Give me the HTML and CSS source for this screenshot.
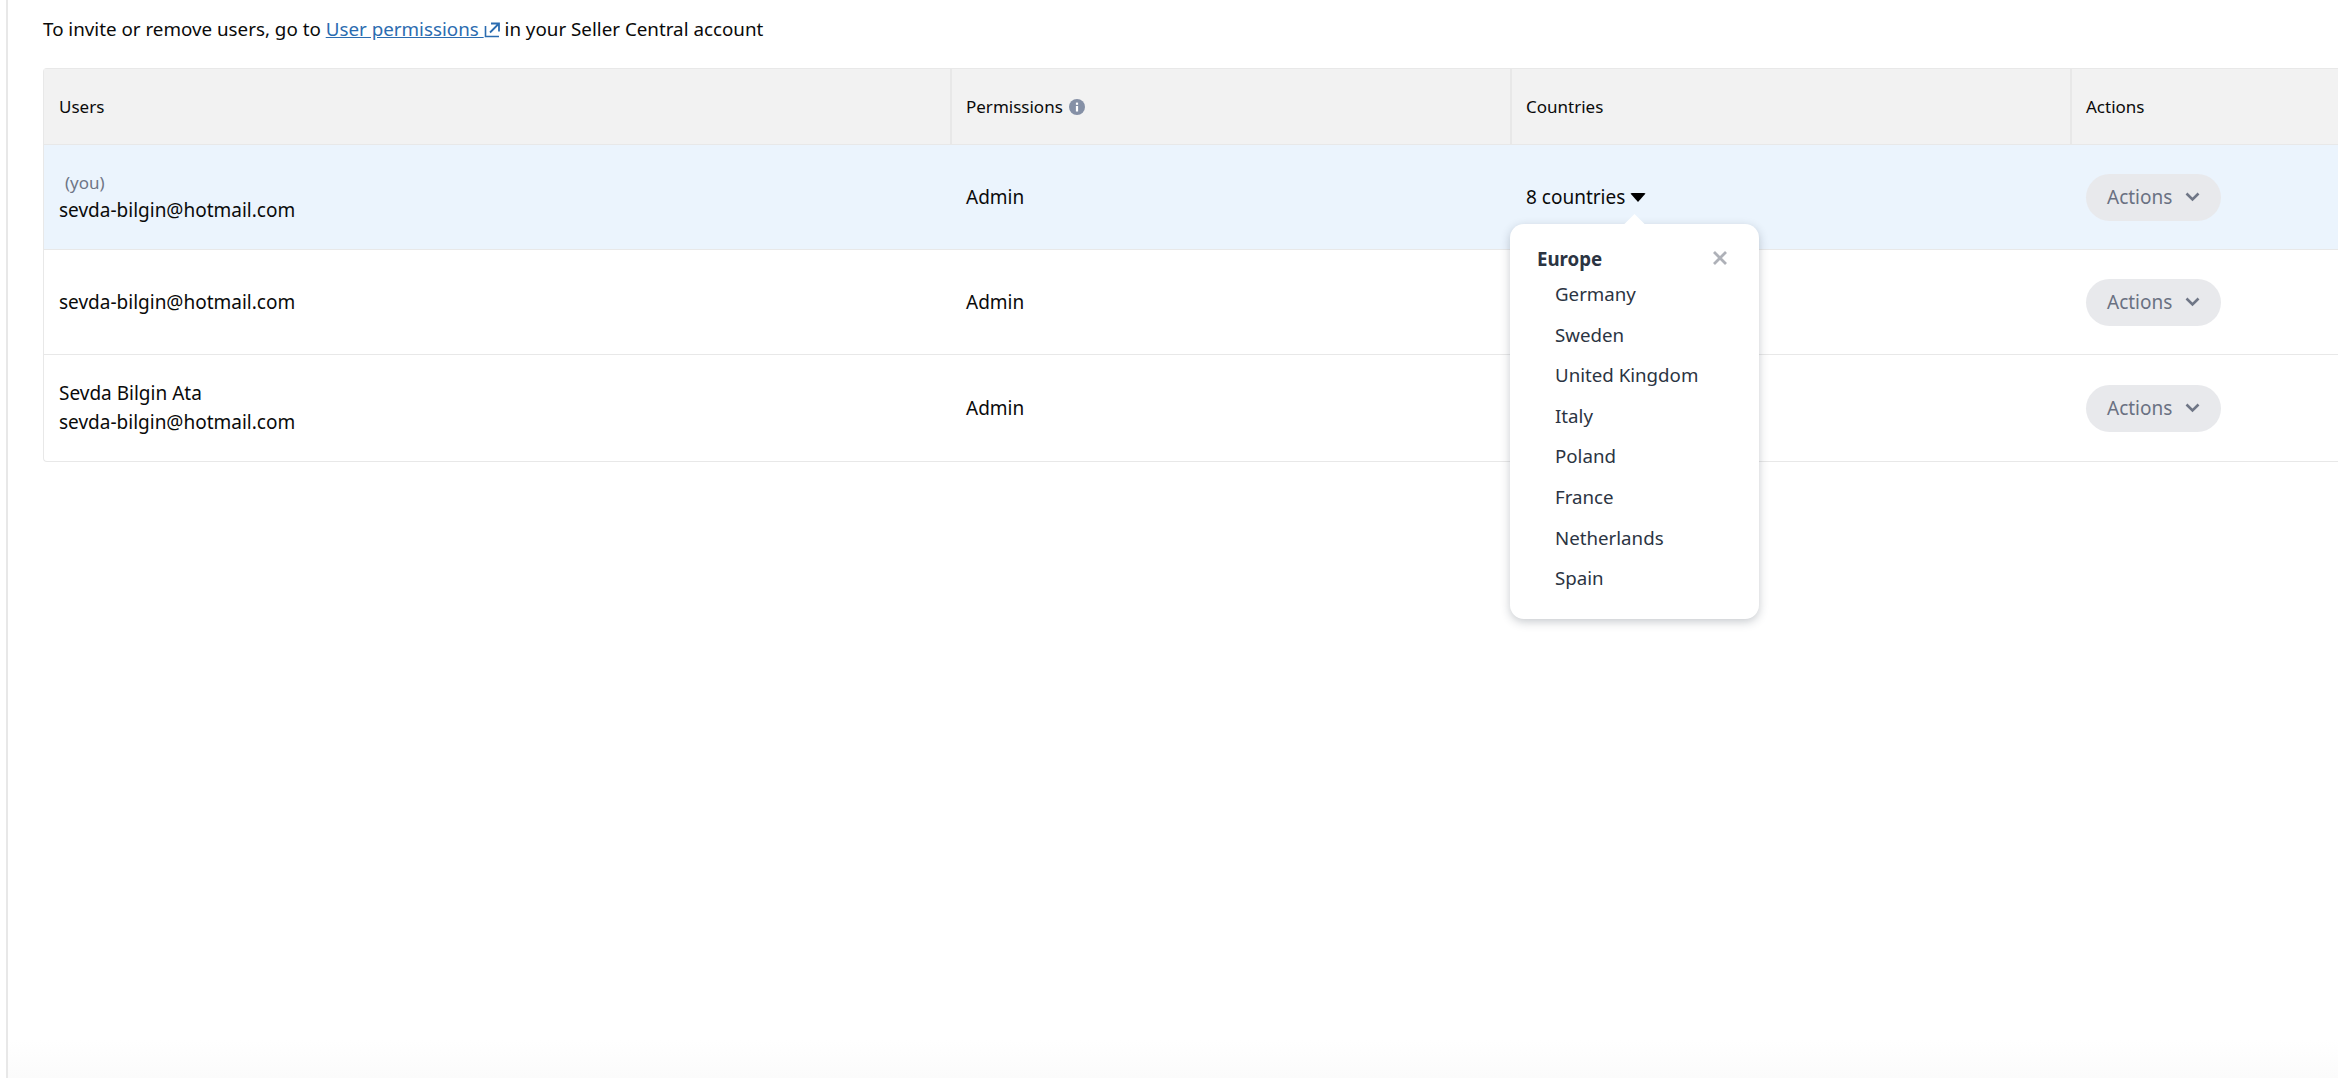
FILE: index.html
```html
<!DOCTYPE html>
<html>

<head>
	<meta charset="UTF-8">
	<title>Users</title>
	<link rel="stylesheet" href="styles.css">
</head>

<body>
	<div class="page">
		<p class="intro">To invite or remove users, go to <a href="#" class="extLink">User permissions <svg class="extIcon" viewBox="0 0 16 16" width="16" height="16"><path d="M1.5 4v10.5H15" fill="none" stroke="#2b6cb0" stroke-width="1.6"/><path d="M7 1.5h8v8M15 1.5L6 10.5" fill="none" stroke="#2b6cb0" stroke-width="1.8"/></svg></a> in your Seller Central account</p>
		<div class="userTable">
			<div class="tableRow headRow">
				<div class="cell firstCell"><span>Users</span></div>
				<div class="cell">
					<span>Permissions</span>
					<svg class="infoIcon" viewBox="0 0 16 16" width="16" height="16"><circle cx="8" cy="8" r="8" fill="#8590a6"/><rect x="6.9" y="7" width="2.2" height="5.5" fill="#fff"/><rect x="6.9" y="3.6" width="2.2" height="2.2" fill="#fff"/></svg>
				</div>
				<div class="cell"><span>Countries</span></div>
				<div class="cell"><span>Actions</span></div>
			</div>
			<div class="tableRow userRow currentRow">
				<div class="cell firstCell userCell">
					<div class="youLabel">(you)</div>
					<div>sevda-bilgin@hotmail.com</div>
				</div>
				<div class="cell">Admin</div>
				<div class="cell countryCell">
					<span>8 countries</span>
					<span class="caret"></span>
					<div class="popover">
						<div class="popoverArrow"></div>
						<div class="popoverHead">
							<b>Europe</b>
							<svg class="closeIcon" viewBox="0 0 14 14" width="14" height="14"><path d="M1 1l12 12M13 1L1 13" fill="none" stroke="#aeb1b8" stroke-width="2.8"/></svg>
						</div>
						<ul class="countryList">
							<li>Germany</li>
							<li>Sweden</li>
							<li>United Kingdom</li>
							<li>Italy</li>
							<li>Poland</li>
							<li>France</li>
							<li>Netherlands</li>
							<li>Spain</li>
						</ul>
					</div>
				</div>
				<div class="cell">
					<a class="actionsButton"><span>Actions</span><svg viewBox="0 0 15 10" width="15" height="10"><path d="M1.5 1.5l6 6 6-6" fill="none" stroke="#6f7686" stroke-width="2.6"/></svg></a>
				</div>
			</div>
			<div class="tableRow userRow">
				<div class="cell firstCell userCell">
					<div>sevda-bilgin@hotmail.com</div>
				</div>
				<div class="cell">Admin</div>
				<div class="cell"></div>
				<div class="cell">
					<a class="actionsButton"><span>Actions</span><svg viewBox="0 0 15 10" width="15" height="10"><path d="M1.5 1.5l6 6 6-6" fill="none" stroke="#6f7686" stroke-width="2.6"/></svg></a>
				</div>
			</div>
			<div class="tableRow userRow lastRow">
				<div class="cell firstCell userCell">
					<div>Sevda Bilgin Ata</div>
					<div>sevda-bilgin@hotmail.com</div>
				</div>
				<div class="cell">Admin</div>
				<div class="cell"></div>
				<div class="cell">
					<a class="actionsButton"><span>Actions</span><svg viewBox="0 0 15 10" width="15" height="10"><path d="M1.5 1.5l6 6 6-6" fill="none" stroke="#6f7686" stroke-width="2.6"/></svg></a>
				</div>
			</div>
		</div>
	</div>
</body>

</html>
```
FILE: styles.css
```css
html, body {
	margin: 0;
	height: 100%;
	overflow: hidden;
}
body {
	font-family: "Noto Sans", Arial, sans-serif;
	font-size: 19px;
	color: #0a0a0a;
	background: #fff;
}
.page {
	height: 100%;
	box-sizing: border-box;
	margin-left: 6px;
	border-left: 2px solid #e8e8e8;
	padding-left: 35px;
	background: linear-gradient(to bottom, #fff 1040px, #fbfbfb 100%);
}
.intro {
	margin: 0;
	padding-top: 16px;
	height: 52px;
	font-size: 18.8px;
	line-height: 26px;
	white-space: nowrap;
}
.extLink {
	color: #2b6cb0;
}
.extIcon {
	vertical-align: -2px;
}
.userTable {
	border: 1px solid #e8e8e8;
	border-right: 0;
	border-radius: 4px 0 0 4px;
}
.tableRow {
	display: grid;
	grid-template-columns: 906px 560px 560px 1fr;
	border-bottom: 1px solid #e8e8e8;
}
.lastRow {
	border-bottom: 0;
}
.headRow {
	height: 75px;
	background: #f2f2f2;
	font-size: 17px;
}
.headRow .cell + .cell {
	border-left: 2px solid #e8e8e8;
	padding-left: 14px;
}
.userRow {
	height: 104px;
}
.lastRow {
	height: 106px;
}
.currentRow {
	background: #ebf4fd;
}
.cell {
	display: flex;
	align-items: center;
	gap: 6px;
	padding-left: 16px;
}
.firstCell {
	padding-left: 15px;
}
.userCell {
	flex-direction: column;
	align-items: flex-start;
	justify-content: center;
	gap: 0;
	line-height: 29px;
}
.youLabel {
	padding-left: 6px;
	font-size: 17px;
	color: #6f7686;
	line-height: 26px;
}
.infoIcon {
	flex: none;
}
.countryCell {
	position: relative;
	gap: 5px;
}
.caret {
	width: 0;
	height: 0;
	border-left: 8px solid transparent;
	border-right: 8px solid transparent;
	border-top: 9px solid #000;
	border-radius: 2px;
}
.popover {
	position: absolute;
	z-index: 10;
	left: 0;
	top: 79px;
	width: 249px;
	height: 395px;
	box-sizing: border-box;
	padding: 21px 27px;
	background: #fff;
	border-radius: 14px;
	box-shadow: 0 3px 10px rgba(35, 47, 63, 0.25);
	color: #2b3442;
	font-size: 18.7px;
}
.popoverArrow {
	position: absolute;
	top: -7px;
	left: 117px;
	width: 15px;
	height: 15px;
	background: #fff;
	transform: rotate(45deg);
}
.popoverHead {
	display: flex;
	justify-content: space-between;
	align-items: center;
	padding-right: 5px;
	height: 26px;
	position: relative;
	margin-bottom: 3px;
}
.countryList {
	list-style: none;
	margin: 0;
	padding: 0 0 0 18px;
}
.countryList li {
	height: 40.6px;
	line-height: 40.6px;
}
.actionsButton {
	display: flex;
	align-items: center;
	gap: 13px;
	height: 47px;
	width: 135px;
	box-sizing: border-box;
	padding-left: 21px;
	border-radius: 24px;
	background: #e8e9ec;
	color: #6a7182;
}
```
